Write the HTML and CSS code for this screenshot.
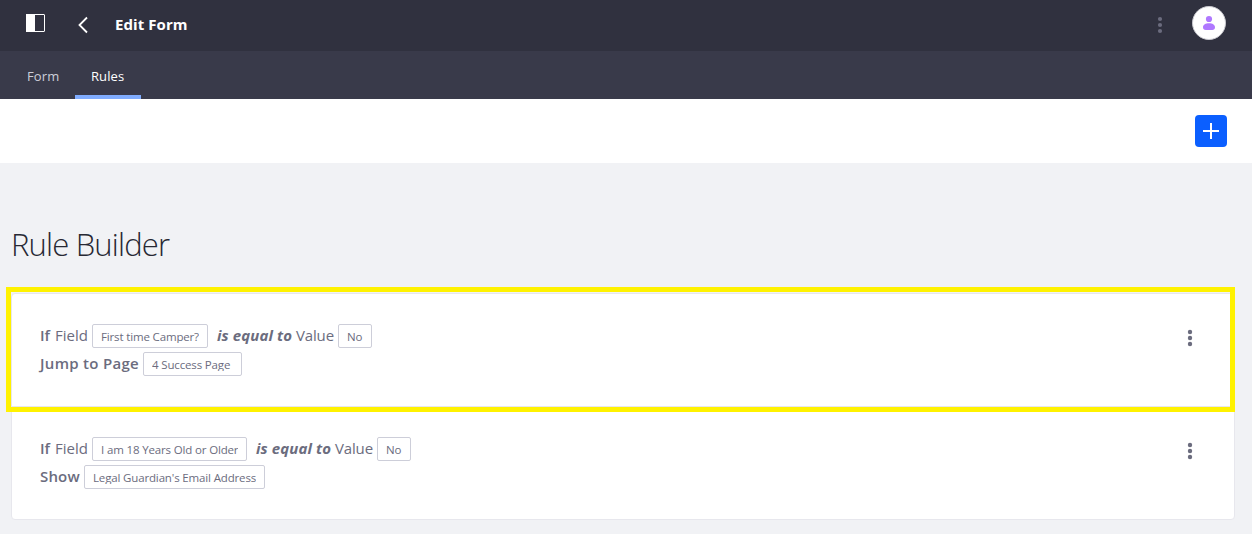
FILE: index.html
```html
<!DOCTYPE html>
<html lang="en">
<head>
<meta charset="utf-8">
<title>Edit Form</title>
<link rel="stylesheet" href="styles.css">
</head>
<body>
<header class="topbar">
  <svg class="panel-icon" width="20" height="20" viewBox="0 0 20 20"><rect x="1.5" y="1.500" width="18" height="17" rx=".5" fill="none" stroke="#fff"/><path d="M1 1h9v18H1z" fill="#fff"/></svg>
  <svg class="back-icon" width="12" height="18" viewBox="0 0 12 18"><path d="M10 1.500L2.500 9l7.500 7.500" fill="none" stroke="#fff" stroke-width="1.800"/></svg>
  <h1 class="title">Edit Form</h1>
  <svg class="dots muted" width="6" height="18" viewBox="0 0 6 18"><circle cx="3" cy="3" r="2.100"/><circle cx="3" cy="9" r="2.100"/><circle cx="3" cy="15" r="2.100"/></svg>
  <svg class="avatar" width="34" height="34" viewBox="0 0 34 34"><circle cx="17" cy="17" r="16.500" fill="#fff" stroke="#c9c9cf"/><circle cx="17" cy="13" r="3.100" fill="#af78ff"/><path d="M11 21.200c0-2.500 2.600-4 6-4s6 1.500 6 4c0 1.800-1 2.800-2.800 2.800h-6.400c-1.800 0-2.800-1-2.800-2.800z" fill="#af78ff"/></svg>
</header>
<nav class="tabs">
  <a class="tab tab-form"><span>Form</span></a>
  <a class="tab tab-rules active"><span>Rules</span></a>
</nav>
<div class="toolbar">
  <button class="add" aria-label="Add"><svg width="32" height="32" viewBox="0 0 32 32"><path d="M8 16h16M16 8v16" stroke="#fff" stroke-width="2"/></svg></button>
</div>
<main class="content">
  <h2 class="heading">Rule Builder</h2>
  <ul class="rules">
    <li class="rule highlighted">
      <div class="lines">
        <div class="line"><b class="if">If</b><span class="field">Field</span><span class="label camper"><span>First time Camper?</span></span><b class="operator">is equal to</b><span class="value">Value</span><span class="label no"><span>No</span></span></div>
        <div class="line"><b class="jump">Jump to Page</b><span class="label page"><span>4 Success Page</span></span></div>
      </div>
      <svg class="dots" width="6" height="18" viewBox="0 0 6 18"><circle cx="3" cy="3" r="2.200"/><circle cx="3" cy="9" r="2.200"/><circle cx="3" cy="15" r="2.200"/></svg>
    </li>
    <li class="rule">
      <div class="lines">
        <div class="line"><b class="if">If</b><span class="field">Field</span><span class="label age"><span>I am 18 Years Old or Older</span></span><b class="operator">is equal to</b><span class="value">Value</span><span class="label no"><span>No</span></span></div>
        <div class="line"><b class="show">Show</b><span class="label email"><span>Legal Guardian's Email Address</span></span></div>
      </div>
      <svg class="dots" width="6" height="18" viewBox="0 0 6 18"><circle cx="3" cy="3" r="2.200"/><circle cx="3" cy="9" r="2.200"/><circle cx="3" cy="15" r="2.200"/></svg>
    </li>
  </ul>
</main>
</body>
</html>
```
FILE: styles.css
```css
*, *::after { box-sizing: border-box; }
body { margin: 0; height: 534px; overflow: hidden; background: #f1f2f5; color: #6b6c7e; font-family: "Open Sans", "Noto Sans", sans-serif; }
svg { display: block; flex: none; }
.topbar { display: flex; align-items: flex-start; height: 51px; padding-left: 25px; padding-right: 26px; background: #30313f; color: #fff; }
.panel-icon { margin-top: 13px; }
.back-icon { margin: 16px 0 0 32px; }
.title { margin: 13px auto 0 26px; font-size: 15px; line-height: 22px; font-weight: 700; letter-spacing: .08px; white-space: nowrap; }
.dots { fill: #6b6c7e; }
.topbar .dots { margin: 16px 29px 0 0; }
.avatar { margin-top: 6px; }
.tabs { display: flex; height: 48px; padding-left: 11px; background: #393a4a; }
.tab { padding: 15px 16px 0; height: 48px; font-size: 13px; line-height: 20px; letter-spacing: .1px; color: #cdced9; white-space: nowrap; }
.tab-form { width: 64px; }
.tab-rules { width: 66px; }
.tab.active { color: #fff; font-weight: 500; border-bottom: 4px solid #80acff; }
.toolbar { display: flex; justify-content: flex-end; height: 64px; padding: 16px 25px; background: #fff; }
.add { width: 32px; height: 32px; padding: 0; border: 0; border-radius: 4px; background: #0b5fff; }
.content { padding: 59px 17px 0 11px; }
.heading { margin: 0; height: 71px; font-size: 31px; line-height: 44px; font-weight: 300; color: #272833; white-space: nowrap; letter-spacing: -.82px; }
.rules { margin: 0; padding: 0; list-style: none; width: 1224px; height: 227px; background: #fff; border: 1px solid #e7e7ed; border-radius: 4px; }
.rule { position: relative; display: flex; justify-content: space-between; height: 113px; padding: 30px 41px 0 28px; }
.rule.highlighted { border-bottom: 1px solid #e7e7ed; }
/* Marker frame around the selected rule */
.rule.highlighted::after { content: ""; position: absolute; left: -6px; top: -7px; width: 1229px; height: 125px; border: 5px solid #fff200; z-index: 1; }
.rule .dots { margin-top: 5px; }
.lines { display: flex; flex-direction: column; gap: 4px; }
.line { display: flex; height: 24px; font-size: 15px; line-height: 23px; white-space: nowrap; }
b { font-weight: 600; }
.if { width: 15px; }
.field { width: 37px; }
.operator { width: 79px; margin-left: 9px; font-style: italic; font-weight: 700; letter-spacing: .1px; }
.value { width: 42px; letter-spacing: -.15px; }
.jump { width: 103px; letter-spacing: .3px; }
.show { width: 44px; letter-spacing: .15px; }
.label { height: 24px; padding: 0 8px; border: 1px solid #cdced9; border-radius: 2px; font-size: 11.5px; line-height: 24px; letter-spacing: -.15px; }
.label span { display: block; height: 18px; overflow: hidden; }
.camper { width: 116px; }
.no { width: 34px; }
.page { width: 99px; }
.age { width: 155px; }
.email { width: 181px; }
```
